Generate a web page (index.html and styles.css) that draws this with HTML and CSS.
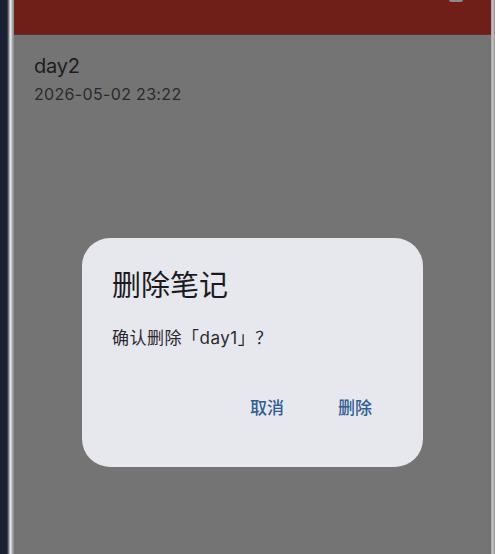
FILE: index.html
```html
<!DOCTYPE html>
<html lang="zh">
<head>
<meta charset="utf-8">
<title>删除笔记</title>
<link rel="stylesheet" href="styles.css">
</head>
<body>
<div class="frame">
  <div class="bezel"></div>
  <div class="screen">
    <header class="appbar"><span class="handle"></span></header>
    <main class="list">
      <div class="note-title">day2</div>
      <div class="note-date">2026-05-02 23:22</div>
    </main>
    <div class="dialog">
      <h2 class="dialog-title">删除笔记</h2>
      <p class="dialog-body">确认删除「day1」？</p>
      <div class="actions">
        <span class="action">取消</span>
        <span class="action">删除</span>
      </div>
    </div>
  </div>
  <div class="edge"></div>
</div>
</body>
</html>
```

FILE: styles.css
```css
* { box-sizing: border-box; }
html, body { margin: 0; padding: 0; }
body { width: 495px; height: 554px; overflow: hidden; font-family: "Inter", "Noto Sans CJK SC", sans-serif; }
.frame { display: flex; height: 554px; background: #747475; }
.bezel { width: 14px; flex: none; background: linear-gradient(to right, #1a2130 0, #1a2130 7px, #55585f 8px, #8e8e90 9px, #e0e0e2 10px, #e4e4e6 11px, #b4b4b6 12px, #9a9a9c 13px, #848486 14px); }
.edge { width: 4px; flex: none; background: linear-gradient(to right, #a8a8aa 0, #c4c4c6 2px, #8c8c8e 4px); }
.screen { flex: 1; position: relative; min-width: 0; background: #747475; }
.appbar { height: 35px; background: #6f1f18; border-bottom: 1px solid #64302c; position: relative; }
.handle { position: absolute; left: 435px; top: 0; width: 14px; height: 2px; background: #8a8a8c; border-radius: 0 0 2px 2px; }
.list { padding: 19px 20px 0; color: #1c1c1e; }
.note-title { font-size: 20px; line-height: 24px; letter-spacing: -0.2px; }
.note-date { font-size: 16px; line-height: 20px; margin-top: 6px; color: #2a2a2c; letter-spacing: 0.33px; }
.dialog { position: absolute; left: 68px; top: 238px; width: 341px; height: 229px; background: #e7e8ed; border-radius: 28px; padding: 31px 30px 0; color: #1b1b1f; }
.dialog-title { margin: 0; font-size: 29px; line-height: 33px; font-weight: 400; }
.dialog-body { margin: 25px 0 0; font-size: 17px; line-height: 22px; color: #2a2a2e; letter-spacing: 0.5px; }
.actions { display: flex; justify-content: flex-end; gap: 54px; margin-top: 48px; padding-right: 21px; }
.action { font-size: 17px; line-height: 22px; font-weight: 500; color: #2f5f95; }
```
